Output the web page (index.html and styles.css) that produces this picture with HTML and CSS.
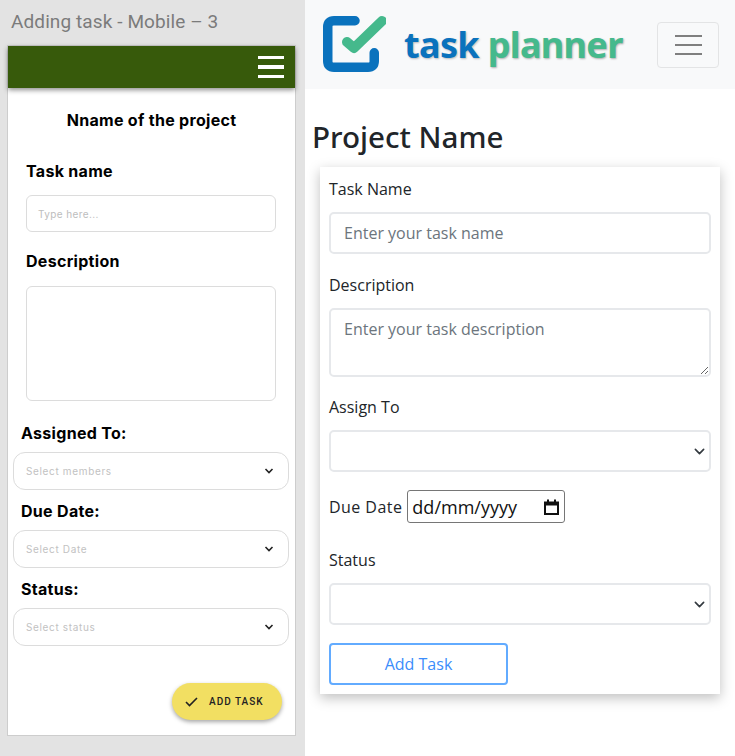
FILE: index.html
```html
<!DOCTYPE html>
<html lang="en">
<head>
    <meta charset="UTF-8">
    <meta name="viewport" content="width=device-width, initial-scale=1.0">
    <title>Adding task</title>
    <link rel="stylesheet" href="styles.css">
</head>
<body>

    <div class="mockup">
        <div class="mockup-title">Adding task - Mobile – 3</div>
        <div class="artboard">
            <div class="app-bar">
                <div class="app-burger"><span></span><span></span><span></span></div>
            </div>
            <div class="mock-project">Nname of the project</div>
            <div class="mock-label mock-first">Task name</div>
            <div class="mock-input">Type here...</div>
            <div class="mock-label mock-desc">Description</div>
            <div class="mock-textarea"></div>

            <div class="mock-label mock-outer mock-assigned">Assigned To:</div>
            <div class="mock-select">
                <span>Select members</span>
                <svg width="10" height="6" viewBox="0 0 10 6"><path d="M1.5 1 L5 4.5 L8.5 1" fill="none" stroke="#222" stroke-width="1.6"/></svg>
            </div>
            <div class="mock-label mock-outer">Due Date:</div>
            <div class="mock-select">
                <span>Select Date</span>
                <svg width="10" height="6" viewBox="0 0 10 6"><path d="M1.5 1 L5 4.5 L8.5 1" fill="none" stroke="#222" stroke-width="1.6"/></svg>
            </div>
            <div class="mock-label mock-outer">Status:</div>
            <div class="mock-select">
                <span>Select status</span>
                <svg width="10" height="6" viewBox="0 0 10 6"><path d="M1.5 1 L5 4.5 L8.5 1" fill="none" stroke="#222" stroke-width="1.6"/></svg>
            </div>

            <div class="fab-row">
                <div class="fab">
                    <svg width="13" height="10" viewBox="0 0 13 10"><path d="M1 5 L4.5 8.5 L12 1" fill="none" stroke="#222" stroke-width="1.6"/></svg>
                    <span>ADD TASK</span>
                </div>
            </div>
        </div>
    </div>

    <div class="site">
        <nav class="navbar">
            <div class="brand">
                <svg class="brand-mark" width="64" height="60" viewBox="0 0 64 60">
                    <path d="M33 5.75 H12 Q5.75 5.75 5.75 12 V46 Q5.75 52.25 12 52.25 H46 Q52.25 52.25 52.25 46 V37.75" fill="none" stroke="#0a72bd" stroke-width="9.5" stroke-linecap="round"/>
                    <path d="M25 27 L32 33 L60 6" fill="none" stroke="#45b98c" stroke-width="10" stroke-linecap="round" stroke-linejoin="round"/>
                </svg>
                <span class="brand-name"><span class="brand-task">task</span> <span class="brand-planner">planner</span></span>
            </div>
            <button class="toggler">
                <span></span><span></span><span></span>
            </button>
        </nav>

        <main class="content">
            <h1>Project Name</h1>
            <form class="task-card">
                <label class="field-label">Task Name</label>
                <input class="form-control" type="text" placeholder="Enter your task name">

                <label class="field-label">Description</label>
                <textarea class="form-control form-area" placeholder="Enter your task description"></textarea>

                <label class="field-label">Assign To</label>
                <select class="form-control form-select"></select>

                <div class="due-row">
                    <label>Due Date</label>
                    <div class="date-box">
                        <span>dd/mm/yyyy</span>
                        <svg width="15" height="16" viewBox="0 0 15 16"><path d="M1 3.5 H14 V15 H1 Z" fill="none" stroke="#111" stroke-width="2"/><path d="M1 3 H14 V6.5 H1 Z" fill="#111"/><path d="M4 0.5 V3 M11 0.5 V3" stroke="#111" stroke-width="2"/></svg>
                    </div>
                </div>

                <label class="field-label">Status</label>
                <select class="form-control form-select"></select>

                <button class="add-btn" type="button">Add Task</button>
            </form>
        </main>
    </div>

</body>
</html>
```

FILE: styles.css
```css
/* General styling */
html, body {
    margin: 0;
    padding: 0;
    height: 100%;
    overflow: hidden;
}

body {
    display: flex;
    background: #fff;
}

/* Left column: the mobile mockup */
.mockup {
    width: 305px;
    height: 756px;
    flex: none;
    background: #e3e3e3;
    padding: 11px 9px 0 7px;
    box-sizing: border-box;
    font-family: Inter, "Liberation Sans", sans-serif;
}

.mockup-title {
    margin-left: 4px;
    font-family: Roboto, "Liberation Sans", sans-serif;
    font-size: 19px;
    line-height: 22px;
    letter-spacing: 0.1px;
    color: #7b7b7b;
}

.artboard {
    margin-top: 12px;
    height: 691px;
    box-sizing: border-box;
    background: #fff;
    border: 1px solid #cdcdcd;
    display: flex;
    flex-direction: column;
    color: #000;
}

.app-bar {
    height: 42px;
    flex: none;
    background: #375a0b;
    box-shadow: 0 2px 5px rgba(0, 0, 0, 0.45);
    display: flex;
    justify-content: flex-end;
    align-items: center;
    padding-right: 11px;
}

.app-burger {
    width: 26px;
    display: flex;
    flex-direction: column;
    gap: 6px;
}

.app-burger span {
    height: 3.5px;
    background: #fff;
}

.mock-project {
    margin-top: 22px;
    text-align: center;
    font-weight: 700;
    font-size: 16px;
    letter-spacing: 0.3px;
    line-height: 20px;
}

.mock-label {
    font-weight: 700;
    font-size: 16px;
    letter-spacing: 0.3px;
    line-height: 20px;
    margin-left: 18px;
}

.mock-first {
    margin-top: 31px;
}

.mock-desc {
    margin-top: 19px;
}

.mock-outer {
    margin-left: 13px;
    margin-top: 11px;
}

.mock-assigned {
    margin-top: 22px;
    margin-bottom: 9px;
}

.mock-outer + .mock-select {
    margin-top: 9px;
}

.mock-input {
    margin: 14px 19px 0 18px;
    height: 37px;
    box-sizing: border-box;
    border: 1px solid #dcdcdc;
    border-radius: 6px;
    padding-left: 11px;
    display: flex;
    align-items: center;
    font-size: 10px;
    letter-spacing: 0.4px;
    color: #bdbdbd;
}

.mock-textarea {
    margin: 15px 19px 0 18px;
    height: 115px;
    box-sizing: border-box;
    border: 1px solid #dcdcdc;
    border-radius: 6px;
}

.mock-select {
    margin: 0 6px 0 5px;
    height: 38px;
    box-sizing: border-box;
    border: 1px solid #dcdcdc;
    border-radius: 12px;
    padding: 0 14px 0 12px;
    display: flex;
    justify-content: space-between;
    align-items: center;
    font-size: 10px;
    letter-spacing: 0.65px;
    color: #c2c2c2;
}

.mock-assigned + .mock-select {
    margin-top: 0;
}

.fab-row {
    margin-top: 37px;
    padding-right: 13px;
    display: flex;
    justify-content: flex-end;
}

.fab {
    width: 110px;
    height: 37px;
    box-sizing: border-box;
    padding-left: 13px;
    border-radius: 19px;
    background: #f2df62;
    box-shadow: 0 2px 4px rgba(0, 0, 0, 0.35);
    display: flex;
    align-items: center;
    gap: 11px;
    font-family: Roboto, "Liberation Sans", sans-serif;
    font-weight: 500;
    font-size: 10px;
    letter-spacing: 1px;
    color: #222;
}

/* Right column: the built page */
.site {
    flex: 1;
    font-family: "Open Sans", "Noto Sans", sans-serif;
    color: #212529;
}

.navbar {
    height: 89px;
    background: #f8f9fa;
    display: flex;
    justify-content: space-between;
    align-items: center;
    padding: 0 16px 0 17px;
}

.brand {
    display: flex;
    align-items: center;
    gap: 18px;
}

.brand-mark {
    margin-top: 1px;
}

.brand-name {
    font-family: "Noto Sans", sans-serif;
    font-weight: 700;
    font-size: 36px;
    line-height: 40px;
    letter-spacing: -0.65px;
    white-space: nowrap;
}

.brand-task {
    color: #0a72bd;
    text-shadow: 1px 1px 2px rgba(0, 0, 0, 0.25);
}

.brand-planner {
    color: #45b98c;
    text-shadow: 1px 1px 2px rgba(0, 0, 0, 0.3);
}

.toggler {
    width: 62px;
    height: 46px;
    padding: 0;
    background: transparent;
    border: 1px solid #e3e4e5;
    border-radius: 4px;
    display: flex;
    flex-direction: column;
    justify-content: center;
    align-items: center;
    gap: 7px;
}

.toggler span {
    width: 27px;
    height: 2px;
    background: #7f7f7f;
}

.content {
    padding: 0 15px 0 8px;
}

.content h1 {
    margin: 26px 0 9px -1px;
    font-family: "Noto Sans", sans-serif;
    font-weight: 500;
    font-size: 29.6px;
    line-height: 43px;
}

.task-card {
    margin-left: 7px;
    height: 527px;
    box-sizing: border-box;
    padding: 10px 9px 0;
    background: #fff;
    box-shadow: 0 4px 12px rgba(0, 0, 0, 0.25);
    display: flex;
    flex-direction: column;
    align-items: flex-start;
    font-size: 16px;
}

.field-label {
    line-height: 24px;
    margin-bottom: 11px;
}

.form-control {
    display: block;
    width: 100%;
    height: 42px;
    box-sizing: border-box;
    padding: 6px 13px;
    margin: 0 0 19px;
    border: 2px solid #e6e8eb;
    border-radius: 5px;
    background-color: #fff;
    font-family: inherit;
    font-size: 16px;
    color: #495057;
}

.form-control::placeholder {
    color: #6c757d;
    opacity: 1;
}

.form-area {
    height: 69px;
    padding-top: 8px;
    margin-bottom: 18px;
}

.form-select {
    appearance: none;
    margin-bottom: 18px;
    background-image: url("data:image/svg+xml,%3Csvg xmlns='http://www.w3.org/2000/svg' viewBox='0 0 16 16'%3E%3Cpath fill='none' stroke='%23343a40' stroke-linecap='round' stroke-linejoin='round' stroke-width='2.4' d='M2 5l6 6 6-6'/%3E%3C/svg%3E");
    background-repeat: no-repeat;
    background-position: right 4px center;
    background-size: 11px 11px;
}

.due-row {
    display: flex;
    align-items: center;
    gap: 5px;
    margin-bottom: 25px;
}

.due-row label {
    letter-spacing: 0.45px;
}

.date-box {
    width: 158px;
    height: 33px;
    box-sizing: border-box;
    padding: 0 5px 0 4px;
    border: 1px solid #767676;
    border-radius: 3px;
    display: flex;
    justify-content: space-between;
    align-items: center;
    font-size: 18px;
    color: #111;
}

.add-btn {
    width: 179px;
    height: 42px;
    background: #fff;
    border: 2px solid #62abff;
    border-radius: 4px;
    color: #3b8dfb;
    font-family: inherit;
    font-size: 16px;
}
```
